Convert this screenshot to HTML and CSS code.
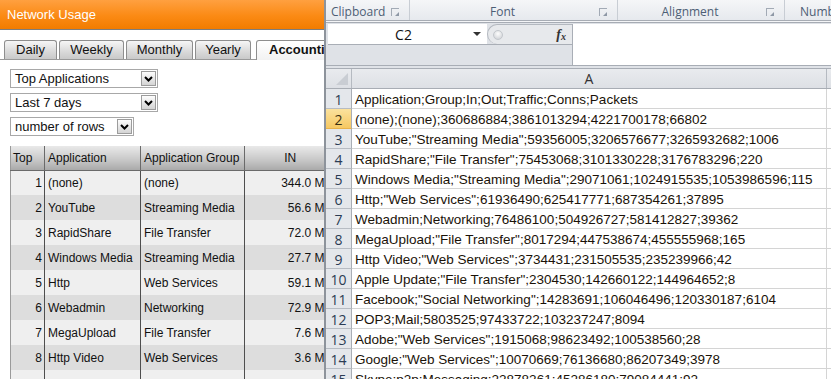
FILE: index.html
```html
<!DOCTYPE html>
<html lang="en">
<head>
  <meta charset="UTF-8">
  <title>Network Usage export</title>
  <link rel="stylesheet" href="styles.css">
</head>
<body>

<div class="screen">

  <!-- ============================
       Network Usage window
  ============================ -->
  <div class="usage">
    <div class="titlebar">Network Usage</div>

    <div class="tabs">
      <div class="tab tab-daily">Daily</div>
      <div class="tab tab-weekly">Weekly</div>
      <div class="tab tab-monthly">Monthly</div>
      <div class="tab tab-yearly">Yearly</div>
      <div class="tab active">Accounting</div>
    </div>

    <div class="filters">
      <div class="dropdown">
        <span class="dropdown-text">Top Applications</span>
        <span class="dropdown-btn"><svg width="9" height="6" viewBox="0 0 9 6"><path d="M1 1l3.5 3.5L8 1" fill="none" stroke="#000" stroke-width="2"/></svg></span>
      </div>
      <div class="dropdown">
        <span class="dropdown-text">Last 7 days</span>
        <span class="dropdown-btn"><svg width="9" height="6" viewBox="0 0 9 6"><path d="M1 1l3.5 3.5L8 1" fill="none" stroke="#000" stroke-width="2"/></svg></span>
      </div>
      <div class="dropdown short">
        <span class="dropdown-text">number of rows</span>
        <span class="dropdown-btn"><svg width="9" height="6" viewBox="0 0 9 6"><path d="M1 1l3.5 3.5L8 1" fill="none" stroke="#000" stroke-width="2"/></svg></span>
      </div>
    </div>

    <table class="apps">
      <colgroup>
        <col class="c-top"><col class="c-app"><col class="c-group"><col class="c-in">
      </colgroup>
      <thead>
        <tr><th>Top</th><th>Application</th><th>Application Group</th><th class="in">IN</th></tr>
      </thead>
      <tbody id="appRows"></tbody>
    </table>
  </div>

  <!-- ============================
       Excel window
  ============================ -->
  <div class="excel">
    <div class="ribbon">
      <div class="group g-clip"><span class="group-label">Clipboard</span><span class="launcher"></span></div>
      <div class="group g-font"><span class="group-label">Font</span><span class="launcher"></span></div>
      <div class="group g-align"><span class="group-label">Alignment</span><span class="launcher"></span></div>
      <div class="group g-num"><span class="group-label">Number</span></div>
    </div>

    <div class="formula">
      <div class="name-area">
        <div class="name-row">
          <div class="namebox">
            <span class="cellref">C2</span>
            <span class="name-arrow"></span>
          </div>
          <div class="handle">
            <span class="knob"></span>
            <span class="fx">f<sub>x</sub></span>
          </div>
        </div>
      </div>
      <div class="fx-input"></div>
    </div>

    <div class="sheet">
      <div class="col-head">
        <div class="corner"><svg width="12" height="12" viewBox="0 0 12 12"><path d="M12 0V12H0z" fill="#c9cdd3"/></svg></div>
        <div class="col-a">A</div>
        <div class="col-b"></div>
      </div>
      <div id="sheetRows"></div>
    </div>
  </div>

</div>

<script>
  // ============================
  // Table data
  // ============================
  const apps = [
    ["(none)", "(none)", "344.0 MB"],
    ["YouTube", "Streaming Media", "56.6 MB"],
    ["RapidShare", "File Transfer", "72.0 MB"],
    ["Windows Media", "Streaming Media", "27.7 MB"],
    ["Http", "Web Services", "59.1 MB"],
    ["Webadmin", "Networking", "72.9 MB"],
    ["MegaUpload", "File Transfer", "7.6 MB"],
    ["Http Video", "Web Services", "3.6 MB"]
  ];

  const lines = [
    'Application;Group;In;Out;Traffic;Conns;Packets',
    '(none);(none);360686884;3861013294;4221700178;66802',
    'YouTube;"Streaming Media";59356005;3206576677;3265932682;1006',
    'RapidShare;"File Transfer";75453068;3101330228;3176783296;220',
    'Windows Media;"Streaming Media";29071061;1024915535;1053986596;115',
    'Http;"Web Services";61936490;625417771;687354261;37895',
    'Webadmin;Networking;76486100;504926727;581412827;39362',
    'MegaUpload;"File Transfer";8017294;447538674;455555968;165',
    'Http Video;"Web Services";3734431;231505535;235239966;42',
    'Apple Update;"File Transfer";2304530;142660122;144964652;8',
    'Facebook;"Social Networking";14283691;106046496;120330187;6104',
    'POP3;Mail;5803525;97433722;103237247;8094',
    'Adobe;"Web Services";1915068;98623492;100538560;28',
    'Google;"Web Services";10070669;76136680;86207349;3978',
    'Skype;p2p;Messaging;22878261;45286180;79084441;92'
  ];

  // ============================
  // Render left table
  // ============================
  const appRows = document.getElementById('appRows');
  apps.forEach((app, index) => {
    const tr = document.createElement('tr');
    tr.innerHTML = `<td class="num">${index + 1}</td><td>${app[0]}</td><td>${app[1]}</td><td class="num">${app[2]}</td>`;
    appRows.appendChild(tr);
  });
  const blank = document.createElement('tr');
  blank.innerHTML = '<td></td><td></td><td></td><td></td>';
  appRows.appendChild(blank);

  // ============================
  // Render sheet rows
  // ============================
  const sheetRows = document.getElementById('sheetRows');
  lines.forEach((line, index) => {
    const row = document.createElement('div');
    row.className = index === 1 ? 'row current' : 'row';
    const text = line.replace(/&/g, '&amp;').replace(/</g, '&lt;');
    row.innerHTML = `<div class="row-head">${index + 1}</div><div class="cell">${text}</div><div class="cell-b"></div>`;
    sheetRows.appendChild(row);
  });
</script>

</body>
</html>
```

FILE: styles.css
```css
/* ============================
   Base
============================ */
* {
  box-sizing: border-box;
}

body {
  margin: 0;
  background: #fff;
  font-family: "Liberation Sans", Arial, sans-serif;
}

.screen {
  display: flex;
  width: 831px;
  height: 379px;
  overflow: hidden;
}

/* ============================
   Network Usage window
============================ */
.usage {
  width: 324px;
  flex-shrink: 0;
  overflow: hidden;
  background: #fff;
}

.titlebar {
  height: 30px;
  padding-left: 7px;
  line-height: 30px;
  font-size: 13px;
  color: #fff;
  background: linear-gradient(#ffa040, #fb8a14 55%, #f27c00);
  border-bottom: 1px solid #7d7d7d;
}

.tabs {
  display: flex;
  gap: 2px;
  margin-top: 10px;
  padding-left: 4px;
  border-bottom: 1px solid #9a9a9a;
}

.tab {
  flex-shrink: 0;
  height: 19px;
  line-height: 18px;
  text-align: center;
  font-size: 13px;
  color: #111;
  background: linear-gradient(#f6f6f6, #d9d9d9 60%, #c9c9c9);
  border: 1px solid #8e8e8e;
  border-bottom: none;
  border-radius: 3px 3px 0 0;
}

.tab-daily   { width: 53px; }
.tab-weekly  { width: 65px; }
.tab-monthly { width: 67px; }
.tab-yearly  { width: 56px; }

.tab.active {
  width: 90px;
  margin-left: 3px;
  margin-bottom: -1px;
  height: 20px;
  font-weight: bold;
  text-align: left;
  padding-left: 12px;
  background: linear-gradient(#fff, #f2f2f2);
}

.filters {
  display: flex;
  flex-direction: column;
  gap: 5px;
  padding: 9px 0 0 10px;
}

.dropdown {
  display: flex;
  align-items: center;
  width: 148px;
  height: 19px;
  border: 1px solid #a8a8a8;
  background: #fff;
}

.dropdown.short {
  width: 124px;
}

.dropdown-text {
  flex: 1;
  padding-left: 4px;
  font-size: 13px;
  color: #111;
}

.dropdown-btn {
  display: flex;
  align-items: center;
  justify-content: center;
  width: 15px;
  height: 15px;
  margin-right: 1px;
  border: 1px solid #9c9c9c;
  background: linear-gradient(#fdfdfd, #d4d4d4);
}

/* ============================
   Applications table
============================ */
.apps {
  width: 325px;
  margin: 10px 0 0 10px;
  table-layout: fixed;
  border-collapse: collapse;
  font-size: 12px;
  color: #111;
}

.c-top   { width: 34px; }
.c-app   { width: 96px; }
.c-group { width: 104px; }
.c-in    { width: 91px; }

.apps th {
  height: 24px;
  padding: 0 3px;
  font-weight: normal;
  text-align: left;
  background: linear-gradient(#e9e9e9, #c6c6c6 60%, #a9a9a9);
  border-left: 1px solid #6a6a6a;
  border-bottom: 1px solid #6a6a6a;
}

.apps th:first-child {
  padding-left: 2px;
  border-left: 1px solid #9a9a9a;
}

.apps th.in {
  text-align: center;
}

.apps td {
  height: 25px;
  padding: 0 3px;
  white-space: nowrap;
  overflow: hidden;
  border-left: 1px solid #4e4e4e;
  background: #efefef;
}

.apps td:first-child {
  border-left: 1px solid #9a9a9a;
  padding-right: 2px;
}

.apps tbody tr:nth-child(even) td {
  background: #dddddd;
}

.apps td.num {
  text-align: right;
}

/* ============================
   Excel window
============================ */
.excel {
  flex: 1;
  overflow: hidden;
  background: #fff;
  border-left: 2px solid #8d939b;
}

.ribbon {
  display: flex;
  height: 23px;
  padding-top: 3px;
  background: linear-gradient(#f5f6f8, #e6e9ee);
  border-bottom: 3px double #a7acb4;
  font-family: "Open Sans", "Noto Sans", sans-serif;
  font-size: 12px;
  color: #4d5e75;
}

.group {
  display: flex;
  align-items: center;
  flex-shrink: 0;
  margin-top: -3px;
  padding-top: 3px;
  border-right: 1px solid #c8cdd4;
}

.g-clip  { width: 84px; }
.g-font  { width: 208px; }
.g-align { width: 167px; }
.g-num   { flex: 1; border-right: none; }

.group-label {
  flex: 1;
  text-align: center;
  white-space: nowrap;
}

.g-clip .group-label {
  text-align: left;
  padding-left: 5px;
}

.g-num .group-label {
  text-align: left;
  padding-left: 15px;
}

.launcher {
  position: relative;
  width: 8px;
  height: 8px;
  margin: 0 10px 0 4px;
  border-top: 1px solid #a2aab5;
  border-left: 1px solid #a2aab5;
}

.launcher::after {
  content: "";
  position: absolute;
  right: 0;
  bottom: 0;
  width: 0;
  height: 0;
  border-style: solid;
  border-width: 0 0 4px 4px;
  border-color: transparent transparent #8e98a6 transparent;
}

/* ============================
   Formula bar
============================ */
.formula {
  display: flex;
  height: 46px;
  background: #dfe2e7;
  border-bottom: 4px double #a8adb5;
}

.name-area {
  width: 246px;
  padding: 1px 0 0 2px;
}

.name-row {
  display: flex;
  height: 21px;
  border-bottom: 1px solid #a9aeb6;
}

.namebox {
  display: flex;
  align-items: center;
  width: 159px;
  background: #fff;
}

.cellref {
  flex: 1;
  text-align: center;
  font-family: "Open Sans", "Noto Sans", sans-serif;
  font-size: 14px;
  color: #111;
  padding-left: 6px;
}

.name-arrow {
  width: 0;
  height: 0;
  margin-right: 6px;
  border-style: solid;
  border-width: 4px 4px 0 4px;
  border-color: #333 transparent transparent transparent;
}

.handle {
  position: relative;
  flex: 1;
  display: flex;
  align-items: center;
  justify-content: flex-end;
  padding-right: 6px;
  background: #e7e9ec;
  border: 1px solid #b3b8bf;
  border-right: none;
  border-bottom: none;
  border-radius: 11px 0 0 11px;
}

.knob {
  position: absolute;
  left: 5px;
  top: 5px;
  width: 10px;
  height: 10px;
  border-radius: 50%;
  background: radial-gradient(circle at 50% 35%, #fdfdfd, #c9ccd1);
  border: 1px solid #c3c7cc;
}

.fx {
  font-family: "Liberation Serif", serif;
  font-style: italic;
  font-weight: bold;
  font-size: 14px;
  color: #333;
}

.fx sub {
  font-size: 10px;
  vertical-align: -1px;
}

.fx-input {
  flex: 1;
  margin-top: 1px;
  background: #fff;
  border-left: 1px solid #a9aeb6;
}

/* ============================
   Sheet
============================ */
.sheet {
  font-family: "Open Sans", "Noto Sans", sans-serif;
}

.col-head {
  display: flex;
  height: 20px;
  background: linear-gradient(#e9ebee, #dde0e5);
  border-bottom: 1px solid #a8adb4;
}

.corner {
  display: flex;
  align-items: flex-end;
  justify-content: flex-end;
  width: 26px;
  padding: 0 3px 3px 0;
  border-right: 1px solid #b5bac1;
}

.col-a {
  width: 475px;
  flex-shrink: 0;
  text-align: center;
  line-height: 19px;
  font-size: 14px;
  color: #333;
  border-right: 1px solid #b5bac1;
}

.col-b {
  flex: 1;
}

.row {
  display: flex;
  height: 20px;
}

.row-head {
  width: 26px;
  flex-shrink: 0;
  padding-top: 2px;
  text-align: center;
  line-height: 17px;
  font-size: 14px;
  color: #2b3c54;
  background: #e4e7eb;
  border-right: 1px solid #a9aeb5;
  border-bottom: 1px solid #b7bcc3;
}

.row.current .row-head {
  background: linear-gradient(#fbe29e, #f6c862);
  border-bottom-color: #e9b24a;
  color: #3a2f10;
}

.cell {
  width: 475px;
  flex-shrink: 0;
  padding: 2px 0 0 3px;
  line-height: 17px;
  font-family: "Liberation Sans", Arial, sans-serif;
  font-size: 13.5px;
  white-space: nowrap;
  color: #1a1208;
  border-right: 1px solid #d4d4d4;
  border-bottom: 1px solid #d4d4d4;
}

.cell-b {
  flex: 1;
  border-bottom: 1px solid #d4d4d4;
}
```
